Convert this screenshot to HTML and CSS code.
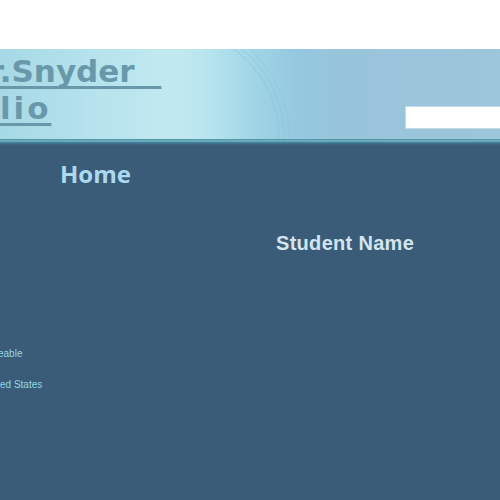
FILE: index.html
```html
<!DOCTYPE html>
<html>
<head>
<meta charset="utf-8">
<link rel="stylesheet" href="styles.css">
</head>
<body>
<div class="top"></div>
<header class="banner">
  <div class="title">
    <div class="line line1"><span>Mr.Snyder&nbsp;</span></div>
    <div class="line line2"><span>Portfolio</span></div>
  </div>
  <div class="search"></div>
</header>
<div class="stripe"></div>
<main class="main">
  <section class="left">
    <h2 class="home">Home</h2>
    <ul class="details">
      <li class="d1">eable</li>
      <li class="d2">ed States</li>
    </ul>
  </section>
  <section class="right">
    <h3 class="name">Student Name</h3>
  </section>
</main>
</body>
</html>
```
FILE: styles.css
```css
html, body { margin: 0; padding: 0; }
body {
  background: #3b5c78;
  width: 500px;
  height: 500px;
  overflow: hidden;
  font-family: "Liberation Sans", Arial, sans-serif;
}
.top { height: 49px; background: #ffffff; }
.banner {
  height: 90px;
  display: flex;
  justify-content: space-between;
  align-items: flex-end;
  background:
    radial-gradient(circle at -30px 89px, transparent 108px, rgba(110,185,212,0.25) 109px, transparent 110.5px, transparent 113px, rgba(110,185,212,0.22) 114px, transparent 115.5px, transparent 118px, rgba(110,185,212,0.18) 119px, transparent 120.5px) 200px 0 / 100px 90px no-repeat,
    linear-gradient(90deg, #a6d9e6 0, #b5e2ec 90px, #c2e9f1 170px, #bce6ef 200px, #aadcea 235px, #9dd1e4 265px, #95c8df 300px, #98c4db 340px, #9dc5db 100%);
  overflow: hidden;
}
.title {
  align-self: flex-start;
  padding-top: 3.5px;
  margin-left: -42px;
  font-family: "DejaVu Sans", sans-serif;
  font-weight: bold;
  font-size: 31px;
  line-height: 37px;
  color: #6a98ab;
  white-space: nowrap;
}
.line span {
  text-decoration: underline;
  text-decoration-thickness: 3px;
  text-underline-offset: 4px;
  text-decoration-skip-ink: none;
}
.line1 { word-spacing: 16px; }
.line2 { margin-left: -85px; letter-spacing: 3px; }
.search {
  width: 94px;
  height: 21px;
  margin-bottom: 10px;
  background: #ffffff;
  border: 1px solid #c5d9e4;
  border-right: none;
  flex-shrink: 0;
}
.stripe {
  height: 6px;
  background: linear-gradient(180deg, #4c8ea2 0, #5b9db0 1px, #7cbccb 2px, #4b8ea3 3px, #3f7892 4px, #3d6a86 5px, #3b5c78 6px);
}
.main {
  display: flex;
}
.left { width: 230px; }
.home {
  margin: 14px 0 0 60px;
  font-family: "Open Sans", sans-serif;
  font-weight: bold;
  font-size: 24px;
  line-height: 30px;
  color: #acd9ef;
}
.details {
  list-style: none;
  margin: 0;
  padding: 0;
  font-size: 10px;
  line-height: 12px;
  color: #8fd8e8;
}
.d1 { margin: 159px 0 0 -2px; }
.d2 { margin: 19px 0 0 0; }
.right { padding-left: 46px; }
.name {
  margin: 86px 0 0 0;
  font-family: "Liberation Sans", Arial, sans-serif;
  font-weight: bold;
  font-size: 20px;
  line-height: 24px;
  letter-spacing: 0.3px;
  color: #d3e5ef;
}
```
